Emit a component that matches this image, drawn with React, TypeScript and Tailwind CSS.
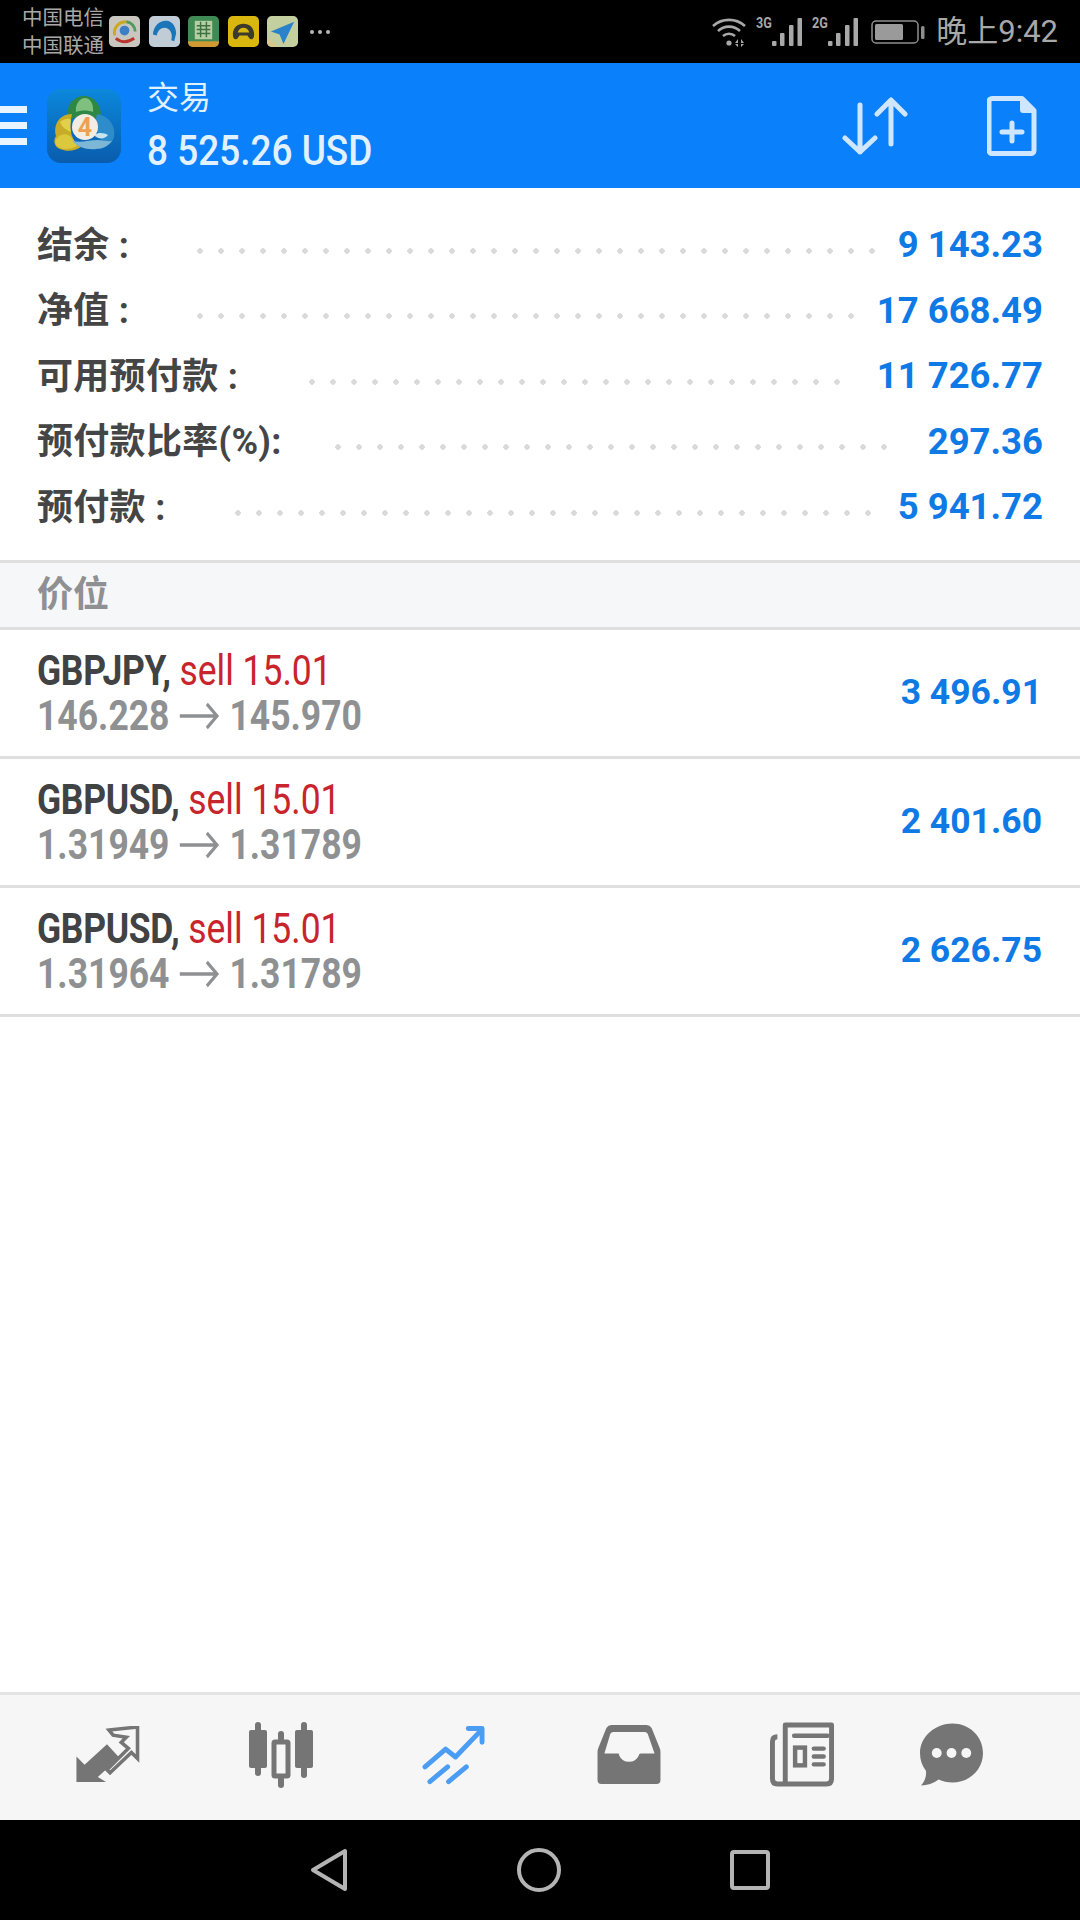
const summary = [
  { label: "结余 :", value: "9 143.23", labelClass: "w-[160px]", dotsClass: "mr-[27px]" },
  { label: "净值 :", value: "17 668.49", labelClass: "w-[160px]", dotsClass: "mr-[48px]" },
  { label: "可用预付款 :", value: "11 726.77", labelClass: "w-[272px]", dotsClass: "mr-[63px]" },
  { label: "预付款比率(%):", value: "297.36", labelClass: "w-[298px]", dotsClass: "mr-[16px]" },
  { label: "预付款 :", value: "5 941.72", labelClass: "w-[198px]", dotsClass: "mr-[32px]" },
];

const positions = [
  { symbol: "GBPJPY,", side: "sell 15.01", from: "146.228", to: "145.970", profit: "3 496.91" },
  { symbol: "GBPUSD,", side: "sell 15.01", from: "1.31949", to: "1.31789", profit: "2 401.60" },
  { symbol: "GBPUSD,", side: "sell 15.01", from: "1.31964", to: "1.31789", profit: "2 626.75" },
];

function SignalBars() {
  return (
    <svg width="30" height="28" viewBox="0 0 30 28" fill="#a8a8a8">
      <rect x="0" y="23" width="4.500" height="5" rx="1" />
      <rect x="8" y="15" width="4.500" height="13" rx="1" />
      <rect x="17" y="7" width="4.500" height="21" rx="1" />
      <rect x="25.500" y="0" width="4.500" height="28" rx="1" />
    </svg>
  );
}

function NotificationIcons() {
  return (
    <div className="ml-[2px] flex items-center gap-[8.500px]">
      <svg width="31" height="31" viewBox="0 0 32 32">
        <rect width="32" height="32" rx="5" fill="#c9c6c0" />
        <path d="M6 20C4 12 10 6 18 6" fill="none" stroke="#c9a824" strokeWidth="3" />
        <path d="M7 23q9 7 19 0" fill="none" stroke="#b9342c" strokeWidth="3" />
        <path d="M18 6a10 10 0 0 1 9 10" fill="none" stroke="#4f9a5c" strokeWidth="3" />
        <circle cx="16" cy="15" r="5" fill="#3d7fc4" />
      </svg>
      <svg width="31" height="31" viewBox="0 0 32 32">
        <rect width="32" height="32" rx="5" fill="#c0ccd6" />
        <path d="M4 19C5 9 12 4 19 5c5 1 9 6 9 13l-2 8-3-1c2-8-2-13-7-13-4 0-7 3-8 8z" fill="#1a76b8" />
      </svg>
      <svg width="31" height="31" viewBox="0 0 32 32">
        <rect width="32" height="32" rx="5" fill="#3f8a55" />
        <rect x="7" y="5" width="18" height="19" fill="#b5cfa2" />
        <path d="M9 10h14M9 14h14M9 18h14M13 6v16M19 6v16" stroke="#3d7045" strokeWidth="1.500" />
        <path d="M0 26h32v1a5 5 0 0 1-5 5H5a5 5 0 0 1-5-5z" fill="#cf9a32" />
      </svg>
      <svg width="31" height="31" viewBox="0 0 32 32">
        <rect width="32" height="32" rx="5" fill="#d9b70f" />
        <path fillRule="evenodd" d="M5 19C5 12 10 8 16 8s11 4 11 11c0 3-1 5-3 5s-2-2-4-4h-8c-2 2-2 4-4 4s-3-2-3-5zm5-2h12c-1-3-3-5-6-5s-5 2-6 5z" fill="#3c3a2a" />
      </svg>
      <svg width="31" height="31" viewBox="0 0 32 32">
        <rect width="32" height="32" rx="5" fill="#c4cf9f" />
        <path d="M0 22l12 10H5a5 5 0 0 1-5-5z" fill="#d8c88e" />
        <path d="M28 6L4 16l9 3 4 10z" fill="#2a82c8" />
      </svg>
      <span className="ml-[3px] flex gap-[4px]">
        <i className="size-[4px] rounded-full bg-[#b8b8b8]" />
        <i className="size-[4px] rounded-full bg-[#b8b8b8]" />
        <i className="size-[4px] rounded-full bg-[#b8b8b8]" />
      </span>
    </div>
  );
}

function StatusBar() {
  return (
    <div className="flex h-[63px] items-center bg-black pl-[22px] pr-[22px] text-[#a8a8a8]">
      <div className="flex w-[85px] flex-col whitespace-nowrap text-[20.500px] leading-[28px]">
        <span>中国电信</span>
        <span>中国联通</span>
      </div>
      <NotificationIcons />
      <div className="ml-auto flex items-center">
        <svg width="36" height="30" viewBox="0 0 36 30" fill="none" stroke="#a8a8a8" strokeWidth="2.600">
          <path d="M1 9a24 24 0 0 1 32 0M6 14a16 16 0 0 1 22 0M11 19a9 9 0 0 1 12 0" />
          <circle cx="17" cy="26" r="2.600" fill="#a8a8a8" stroke="none" />
          <path d="M26 22l-3 4 3 0zM29 22l3 4-3 0zM26 27l-3 0 3 3zM29 27l3 0-3 3z" fill="#a8a8a8" stroke="none" />
        </svg>
        <div className="ml-[8px] flex w-[46px] items-start">
          <span className="mt-[-2px] w-[16px] origin-left scale-x-[0.9] text-[14px] font-bold leading-[14px]">3G</span>
          <SignalBars />
        </div>
        <div className="ml-[10px] flex w-[46px] items-start">
          <span className="mt-[-2px] w-[16px] origin-left scale-x-[0.9] text-[14px] font-bold leading-[14px]">2G</span>
          <SignalBars />
        </div>
        <svg className="ml-[13px]" width="54" height="26" viewBox="0 0 54 26">
          <rect x="1" y="2" width="46" height="22" rx="4" fill="none" stroke="#8e8e8e" strokeWidth="1.500" />
          <rect x="4" y="5" width="28" height="16" rx="1.500" fill="#9a9a9a" />
          <rect x="50" y="7" width="3.500" height="13" rx="1.500" fill="#8e8e8e" />
        </svg>
        <span className="ml-[11px] text-[31px] leading-none">晚上9:42</span>
      </div>
    </div>
  );
}

function Logo() {
  return (
    <div className="ml-[20px] grid size-[74px] place-items-center rounded-[14px] bg-gradient-to-b from-[#0b88dc] to-[#0a5cac]">
      <svg width="64" height="64" viewBox="0 0 64 64">
        <path d="M16 28C12 12 22 2 32 2s20 10 16 26c-4-4-9-6-16-6s-12 2-16 6z" fill="#2f8744" />
        <path d="M24 18c-1-8 4-14 9-14s9 6 8 14c-5-2-12-2-17 0z" fill="#7fc07e" />
        <path d="M20 20C7 20 1 31 4 42c-3 4-2 11 4 13 7 3 15 2 21-2-9-5-13-17-9-33z" fill="#c8ab28" />
        <path d="M8 28c5-4 9-4 11-2-1 5-1 8 0 12-4-2-9-4-11-10z" fill="#e3cf4a" />
        <path d="M5 44c3-4 9-5 13-2 3 3 5 6 7 10-5 3-12 4-17 2-5-2-6-7-3-10z" fill="#dcc83c" />
        <path d="M45 20c13 2 19 13 17 23-2 7-8 11-15 12 4-8 2-16-5-20z" fill="#2f8ccb" />
        <path d="M20 47c6 6 14 9 24 8 6 0 12-3 16-8-5 1-10-1-14-1-9 0-16 3-26 1z" fill="#7db7d6" />
        <path d="M42 41c4-3 11-2 14 0-3 4-10 5-14 0z" fill="#c7e4f0" />
        <circle cx="33" cy="33" r="13" fill="#f2ece2" />
        <text x="33" y="42" textAnchor="middle" fontSize="25" fontWeight="700" fill="#ee9f52" fontFamily="Roboto">4</text>
      </svg>
    </div>
  );
}

function Header() {
  return (
    <div className="flex h-[125px] items-center bg-[#0a80fb] text-[#e2f1ff]">
      <div className="flex w-[27px] flex-col gap-[9px]">
        <i className="h-[7px] bg-[#e8f4ff]" />
        <i className="h-[7px] bg-[#e8f4ff]" />
        <i className="h-[7px] bg-[#e8f4ff]" />
      </div>
      <Logo />
      <div className="ml-[26px] flex flex-col pt-[2px]">
        <span className="text-[32px] leading-[40px]">交易</span>
        <span className="mt-[8px] origin-left scale-x-[0.88] whitespace-nowrap text-[42px] font-medium leading-[50px]">8 525.26 USD</span>
      </div>
      <div className="ml-auto flex items-center">
        <svg width="66" height="58" viewBox="0 0 66 58" fill="none" stroke="#cfe6ff" strokeWidth="5" strokeLinecap="round" strokeLinejoin="round">
          <path d="M18 8v47M3 41l15 14 15-14" />
          <path d="M49 3v44M35 17L49 3l14 14" />
        </svg>
        <svg className="ml-[79px] mr-[43px]" width="50" height="60" viewBox="0 0 50 60" fill="none" stroke="#cfe6ff" strokeLinecap="round" strokeLinejoin="round">
          <path d="M5 2.500h30l12 12v40a3 3 0 0 1-3 3H5a3 3 0 0 1-3-3v-49a3 3 0 0 1 3-3z" strokeWidth="5" />
          <path d="M33 3v11a3 3 0 0 0 3 3h11z" fill="#cfe6ff" stroke="none" />
          <path d="M25 27v18M15 36h20" strokeWidth="5" />
        </svg>
      </div>
    </div>
  );
}

function SummaryList() {
  return (
    <div className="flex h-[372px] flex-col pl-[37px] pr-[37px] pt-[25px]">
      {summary.map((row) => (
        <div key={row.label} className="flex h-[65.500px] items-center">
          <span className={`${row.labelClass} shrink-0 whitespace-nowrap text-[36px] font-bold tracking-[0.3px] text-[#454545]`}>
            {row.label}
          </span>
          <span
            className={`${row.dotsClass} mt-[10px] h-[6px] flex-1 bg-[radial-gradient(circle_at_3px_3px,#dadada_2.500px,transparent_3px)] bg-[length:21px_6px] bg-repeat-x`}
          />
          <span className="flex w-[140px] shrink-0 justify-end whitespace-nowrap text-[36.500px] font-bold text-[#0f7ae5]">
            {row.value}
          </span>
        </div>
      ))}
    </div>
  );
}

function PositionRow({ position }: { position: (typeof positions)[number] }) {
  return (
    <div className="flex h-[129px] items-center justify-between border-b-[3px] border-[#dfdfdf] pl-[37px] pr-[38px]">
      <div className="origin-left scale-x-[0.845] whitespace-nowrap text-[42px] leading-[45px]">
        <div>
          <span className="font-bold tracking-[-0.4px] text-[#414244]">{position.symbol}</span>{" "}
          <span className="text-[#c8242b]">{position.side}</span>
        </div>
        <div className="flex items-center font-bold text-[#8e9092]">
          {position.from}
          <svg className="ml-[11px] mr-[12px]" width="48" height="28" viewBox="0 0 48 28" fill="none" stroke="#8e9092" strokeWidth="3.500">
            <path d="M1 14h44M33 2l12 12-12 12" />
          </svg>
          {position.to}
        </div>
      </div>
      <span className="whitespace-nowrap text-[35.500px] font-bold text-[#0f7ae5]">{position.profit}</span>
    </div>
  );
}

function TabBar() {
  return (
    <div className="flex h-[128px] items-center border-t-[3px] border-[#e4e4e4] bg-[#f6f6f6] pb-[6px] pl-[76px]">
      <svg width="64" height="57" viewBox="0 0 62 56" fill="#757575">
        <path d="M0 55V30l8 8 22-20 12 13-21 19 8 5z" />
        <path d="M32 4l28-3v31l-6-6-21 20-3-3 21-21-7-6 5-5-13-2z" fill="none" stroke="#757575" strokeWidth="3.500" />
      </svg>
      <svg className="ml-[108px]" width="66" height="66" viewBox="0 0 64 66" fill="#757575">
        <rect x="0" y="8" width="18" height="38" rx="2" />
        <rect x="6" y="0" width="6" height="47" rx="3" />
        <rect x="6" y="40" width="6" height="14" rx="3" />
        <rect x="46" y="8" width="18" height="38" rx="2" />
        <rect x="52" y="0" width="6" height="56" rx="3" />
        <rect x="25" y="20" width="14" height="34" rx="1" fill="none" stroke="#757575" strokeWidth="5" />
        <rect x="29" y="9" width="6" height="11" rx="3" />
        <rect x="29" y="54" width="6" height="12" rx="3" />
      </svg>
      <svg className="ml-[108px]" width="63" height="62" viewBox="0 0 64 62" fill="none" stroke="#4a9df2" strokeWidth="5" strokeLinecap="round" strokeLinejoin="round">
        <path d="M3 43l21-18 10 8 26-27" />
        <path d="M47 4h14v14" />
        <path d="M8 58l18-15M27 58l18-15" />
      </svg>
      <svg className="ml-[112px]" width="64" height="59" viewBox="0 0 64 60" fill="#757575">
        <path fillRule="evenodd" d="M14 0h36q3 0 5 3l8 20q1 2 1 5v28q0 4-4 4H4q-4 0-4-4V28q0-3 1-5L9 3q2-3 5-3zm2 7q-2 0-3 2L7 29h14c1 0 1 1 1 2a11 11 0 0 0 20 0c0-1 1-2 2-2h14L51 9q-1-2-3-2z" />
      </svg>
      <svg className="ml-[108px]" width="66" height="65" viewBox="0 0 66 66" fill="none" stroke="#757575" strokeWidth="5">
        <path d="M8 15q-5 0-5 5v38q0 5 5 5h50q5 0 5-5V3H16v60" strokeLinejoin="round" />
        <path d="M25 14h34" strokeWidth="4.500" strokeLinecap="round" />
        <rect x="26" y="26" width="10" height="18" strokeWidth="4.500" />
        <path d="M45 27h10M45 35h10M45 43h10" strokeWidth="4.500" strokeLinecap="round" />
      </svg>
      <svg className="ml-[85px]" width="63" height="64" viewBox="0 0 64 64" fill="#757575">
        <path d="M33 0c17 0 31 13 31 30S50 60 33 60c-5 0-10-1-14-3-5 4-12 6-18 6 3-3 6-9 5-15C2 43 0 37 0 30 0 13 16 0 33 0z" />
        <circle cx="17" cy="30" r="5" fill="#f6f6f6" />
        <circle cx="32" cy="30" r="5" fill="#f6f6f6" />
        <circle cx="47" cy="30" r="5" fill="#f6f6f6" />
      </svg>
    </div>
  );
}

function NavBar() {
  return (
    <div className="flex h-[100px] items-center justify-center gap-[169px] bg-black">
      <svg width="38" height="44" viewBox="0 0 38 44" fill="none" stroke="#b4b4b4" strokeWidth="4" strokeLinejoin="round">
        <path d="M35 3v38L3 22z" />
      </svg>
      <svg width="44" height="44" viewBox="0 0 44 44" fill="none" stroke="#b4b4b4" strokeWidth="4">
        <circle cx="22" cy="22" r="20" />
      </svg>
      <svg width="40" height="40" viewBox="0 0 40 40" fill="none" stroke="#b4b4b4" strokeWidth="4" strokeLinejoin="round">
        <rect x="2" y="2" width="36" height="36" rx="2" />
      </svg>
    </div>
  );
}

export default function App() {
  return (
    <div className="flex h-[1920px] w-[1080px] flex-col overflow-hidden bg-white font-['Roboto','Noto_Sans_CJK_SC',sans-serif]">
      <StatusBar />
      <Header />
      <SummaryList />
      <div className="flex h-[70px] items-center border-y-[3px] border-[#dfdfdf] bg-[#f6f7f8] pl-[37px] text-[36px] font-bold text-[#8e9092]">
        价位
      </div>
      {positions.map((position, index) => (
        <PositionRow key={index} position={position} />
      ))}
      <div className="flex-1" />
      <TabBar />
      <NavBar />
    </div>
  );
}
